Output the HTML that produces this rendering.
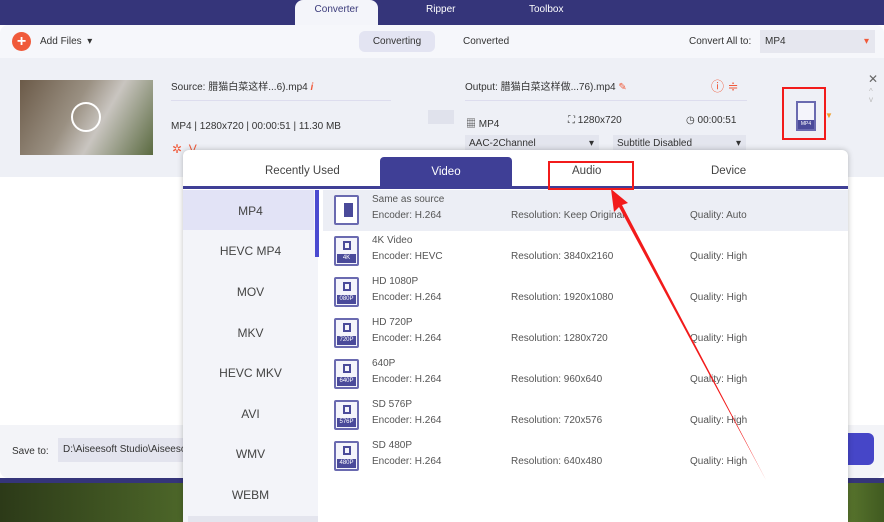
<!DOCTYPE html>
<html><head><meta charset="utf-8"><style>
*{margin:0;padding:0;box-sizing:border-box}
body{width:884px;height:522px;overflow:hidden;position:relative;font-family:"Liberation Sans","Noto Sans CJK SC",sans-serif;font-size:10px;color:#333;background:#fff}
.a{position:absolute;white-space:nowrap}
.top{left:0;top:0;width:884px;height:25px;background:#35357a}
.tab{color:#fff;font-size:10px;top:4px}
.conv{left:295px;top:0;width:83px;height:25px;background:#f4f5fa;border-radius:8px 8px 0 0;color:#3a3a7a;text-align:center;line-height:20px}
.tb{left:0;top:25px;width:884px;height:33px;background:#f6f7fb;border-radius:8px 8px 0 0}
.file{left:0;top:58px;width:884px;height:119px;background:#eef0f6}
.bot{left:0;top:425px;width:884px;height:53px;background:#f3f4f8;border-radius:0 0 8px 8px}
.pop{left:183px;top:150px;width:665px;height:372px;background:#fff;border-radius:6px 6px 0 0;box-shadow:0 0 6px rgba(0,0,0,.25)}
.ptab{top:15px;font-size:11.5px;color:#444}
.left{left:0;top:40px;width:135px;height:332px;background:#f3f4f9}
.li{position:absolute;left:0;width:135px;text-align:center;font-size:12px;color:#444}
.row{position:absolute;left:140px;width:525px;height:41px}
.ic{position:absolute;left:11px;top:5px;width:25px;height:30px;border:2px solid #6a6ab0;border-radius:2px;background:#f4f4fb}
.ic b{position:absolute;left:7px;top:3px;width:8px;height:9px;border:2px solid #4a4a9a}
.ic i{position:absolute;left:1px;bottom:1px;width:19px;height:9px;background:#4a4a9a;color:#fff;font-size:6px;font-style:normal;text-align:center;line-height:9px}
.t1{position:absolute;left:49px;top:4px;color:#555}
.t2{position:absolute;top:20px;color:#555}
.g{position:absolute;left:626px;top:19px;width:12px;height:12px;border:2px dotted #7a7ae0;border-radius:50%}
</style></head><body>
<div class="a top"></div>
<div class="a conv">Converter</div>
<div class="a tab" style="left:426px">Ripper</div>
<div class="a tab" style="left:529px">Toolbox</div>
<div class="a tb"></div>
<div class="a" style="left:12px;top:32px;width:19px;height:19px;border-radius:50%;background:#f05a3a;color:#fff;text-align:center;font-size:16px;line-height:19px;font-weight:bold">+</div>
<div class="a" style="left:40px;top:36px">Add Files &nbsp;▾</div>
<div class="a" style="left:359px;top:31px;width:76px;height:21px;background:#e3e4f2;border-radius:6px;text-align:center;line-height:21px">Converting</div>
<div class="a" style="left:463px;top:36px">Converted</div>
<div class="a" style="left:689px;top:36px">Convert All to:</div>
<div class="a" style="left:760px;top:30px;width:115px;height:23px;background:#e6e7ef;padding:6px 5px">MP4<span style="position:absolute;right:6px;color:#f05a3a">▾</span></div>
<div class="a file"></div>
<div class="a" style="left:20px;top:80px;width:133px;height:75px;background:linear-gradient(120deg,#6b5a48,#9a9082 40%,#c9c5c0 60%,#5a6a40)"></div>
<div class="a" style="left:71px;top:102px;width:30px;height:30px;border:2px solid #fff;border-radius:50%"></div>
<div class="a" style="left:171px;top:78px">Source: 腊猫白菜这样...6).mp4 <span style="color:#f05a3a;font-style:italic;font-weight:bold">i</span></div>
<div class="a" style="left:171px;top:100px;width:220px;height:1px;background:#dde"></div>
<div class="a" style="left:171px;top:121px">MP4 | 1280x720 | 00:00:51 | 11.30 MB</div>
<div class="a" style="left:172px;top:142px;color:#f05a3a;font-size:12px">✲ &nbsp;V</div>
<div class="a" style="left:428px;top:110px;width:26px;height:14px;background:#e0e2ec"></div>
<div class="a" style="left:465px;top:78px">Output: 腊猫白菜这样做...76).mp4 <span style="color:#f05a3a">✎</span></div>
<div class="a" style="left:711px;top:76px;color:#f05a3a;font-size:13px">ⓘ ≑</div>
<div class="a" style="left:465px;top:100px;width:282px;height:1px;background:#dde"></div>
<div class="a" style="left:466px;top:115px">▦ MP4</div>
<div class="a" style="left:568px;top:115px">⛶ 1280x720</div>
<div class="a" style="left:686px;top:115px">◷ 00:00:51</div>
<div class="a" style="left:465px;top:135px;width:134px;height:18px;background:#e3e5ee;padding:3px 4px">AAC-2Channel<span style="position:absolute;right:5px">▾</span></div>
<div class="a" style="left:613px;top:135px;width:133px;height:18px;background:#e3e5ee;padding:3px 4px">Subtitle Disabled<span style="position:absolute;right:5px">▾</span></div>
<div class="a" style="left:782px;top:87px;width:44px;height:53px;border:2px solid #f21b1b"></div>
<div class="a" style="left:796px;top:101px;width:20px;height:30px;border:2px solid #6a6ab0;background:#f4f4fb"><div style="position:absolute;left:0;bottom:0;width:16px;height:9px;background:#4a4a9a;color:#fff;font-size:5px;text-align:center;line-height:9px">MP4</div></div>
<div class="a" style="left:825px;top:111px;color:#f0a030;font-size:8px">▼</div>
<div class="a" style="left:868px;top:72px;font-size:12px;color:#666">✕</div>
<div class="a" style="left:869px;top:88px;color:#bbb;font-size:8px;line-height:8px">^<br>v</div>
<div class="a bot"></div>
<div class="a" style="left:12px;top:446px">Save to:</div>
<div class="a" style="left:58px;top:438px;width:130px;height:24px;background:#e3e4ee;padding:6px 5px;overflow:hidden">D:\Aiseesoft Studio\Aiseesoft</div>
<div class="a" style="left:848px;top:433px;width:26px;height:32px;background:#4646c8;border-radius:0 6px 6px 0"></div>
<div class="a" style="left:0;top:478px;width:884px;height:5px;background:#35357a"></div>
<div class="a" style="left:0;top:483px;width:884px;height:39px;background:linear-gradient(90deg,#2c3a18,#5b7a30 30%,#30401a 60%,#7a9a40 90%,#405a20)"></div>
<div class="a pop">
 <div class="a ptab" style="left:82px">Recently Used</div>
 <div class="a" style="left:197px;top:7px;width:132px;height:30px;background:#3f3f96;border-radius:4px 4px 0 0;color:#fff;text-align:center;line-height:30px;font-size:11.5px">Video</div>
 <div class="a ptab" style="left:389px">Audio</div>
 <div class="a ptab" style="left:528px">Device</div>
 <div class="a" style="left:0;top:36px;width:665px;height:3px;background:#3f3f96"></div>
 <div class="a" style="left:365px;top:11px;width:86px;height:29px;border:2px solid #f21b1b"></div>
 <div class="a left"></div>
 <div class="a" style="left:0;top:40px;width:131px;height:40px;background:#e2e3f6"></div>
 <div class="a" style="left:132px;top:40px;width:4px;height:67px;background:#4a4ad0"></div>
 <div class="li" style="top:54px">MP4</div><div class="li" style="top:94px">HEVC MP4</div><div class="li" style="top:135px">MOV</div><div class="li" style="top:176px">MKV</div><div class="li" style="top:216px">HEVC MKV</div><div class="li" style="top:257px">AVI</div><div class="li" style="top:297px">WMV</div><div class="li" style="top:338px">WEBM</div>
 <div class="a" style="left:5px;top:366px;width:130px;height:6px;background:#e4e5ee"></div>
 <div class="row" style="top:40px;background:#eceef5"><div class="ic" style="background:#fff"><b style="left:8px;top:6px;width:9px;height:14px;background:#4a4a9a;border:none"></b></div><div class="t1">Same as source</div><div class="t2" style="left:49px">Encoder: H.264</div><div class="t2" style="left:188px">Resolution: Keep Original</div><div class="t2" style="left:367px">Quality: Auto</div><div class="g"></div></div>
 <div class="row" style="top:81px"><div class="ic"><b></b><i>4K</i></div><div class="t1">4K Video</div><div class="t2" style="left:49px">Encoder: HEVC</div><div class="t2" style="left:188px">Resolution: 3840x2160</div><div class="t2" style="left:367px">Quality: High</div><div class="g"></div></div>
 <div class="row" style="top:122px"><div class="ic"><b></b><i>080P</i></div><div class="t1">HD 1080P</div><div class="t2" style="left:49px">Encoder: H.264</div><div class="t2" style="left:188px">Resolution: 1920x1080</div><div class="t2" style="left:367px">Quality: High</div><div class="g"></div></div>
 <div class="row" style="top:163px"><div class="ic"><b></b><i>720P</i></div><div class="t1">HD 720P</div><div class="t2" style="left:49px">Encoder: H.264</div><div class="t2" style="left:188px">Resolution: 1280x720</div><div class="t2" style="left:367px">Quality: High</div><div class="g"></div></div>
 <div class="row" style="top:204px"><div class="ic"><b></b><i>640P</i></div><div class="t1">640P</div><div class="t2" style="left:49px">Encoder: H.264</div><div class="t2" style="left:188px">Resolution: 960x640</div><div class="t2" style="left:367px">Quality: High</div><div class="g"></div></div>
 <div class="row" style="top:245px"><div class="ic"><b></b><i>576P</i></div><div class="t1">SD 576P</div><div class="t2" style="left:49px">Encoder: H.264</div><div class="t2" style="left:188px">Resolution: 720x576</div><div class="t2" style="left:367px">Quality: High</div><div class="g"></div></div>
 <div class="row" style="top:286px"><div class="ic"><b></b><i>480P</i></div><div class="t1">SD 480P</div><div class="t2" style="left:49px">Encoder: H.264</div><div class="t2" style="left:188px">Resolution: 640x480</div><div class="t2" style="left:367px">Quality: High</div><div class="g"></div></div>
</div>
<svg class="a" style="left:0;top:0" width="884" height="522"><path d="M611 189 L628 203 L622 205 L766 480 L619 207 L614 212 Z" fill="#f21b1b"/></svg>
</body></html>
